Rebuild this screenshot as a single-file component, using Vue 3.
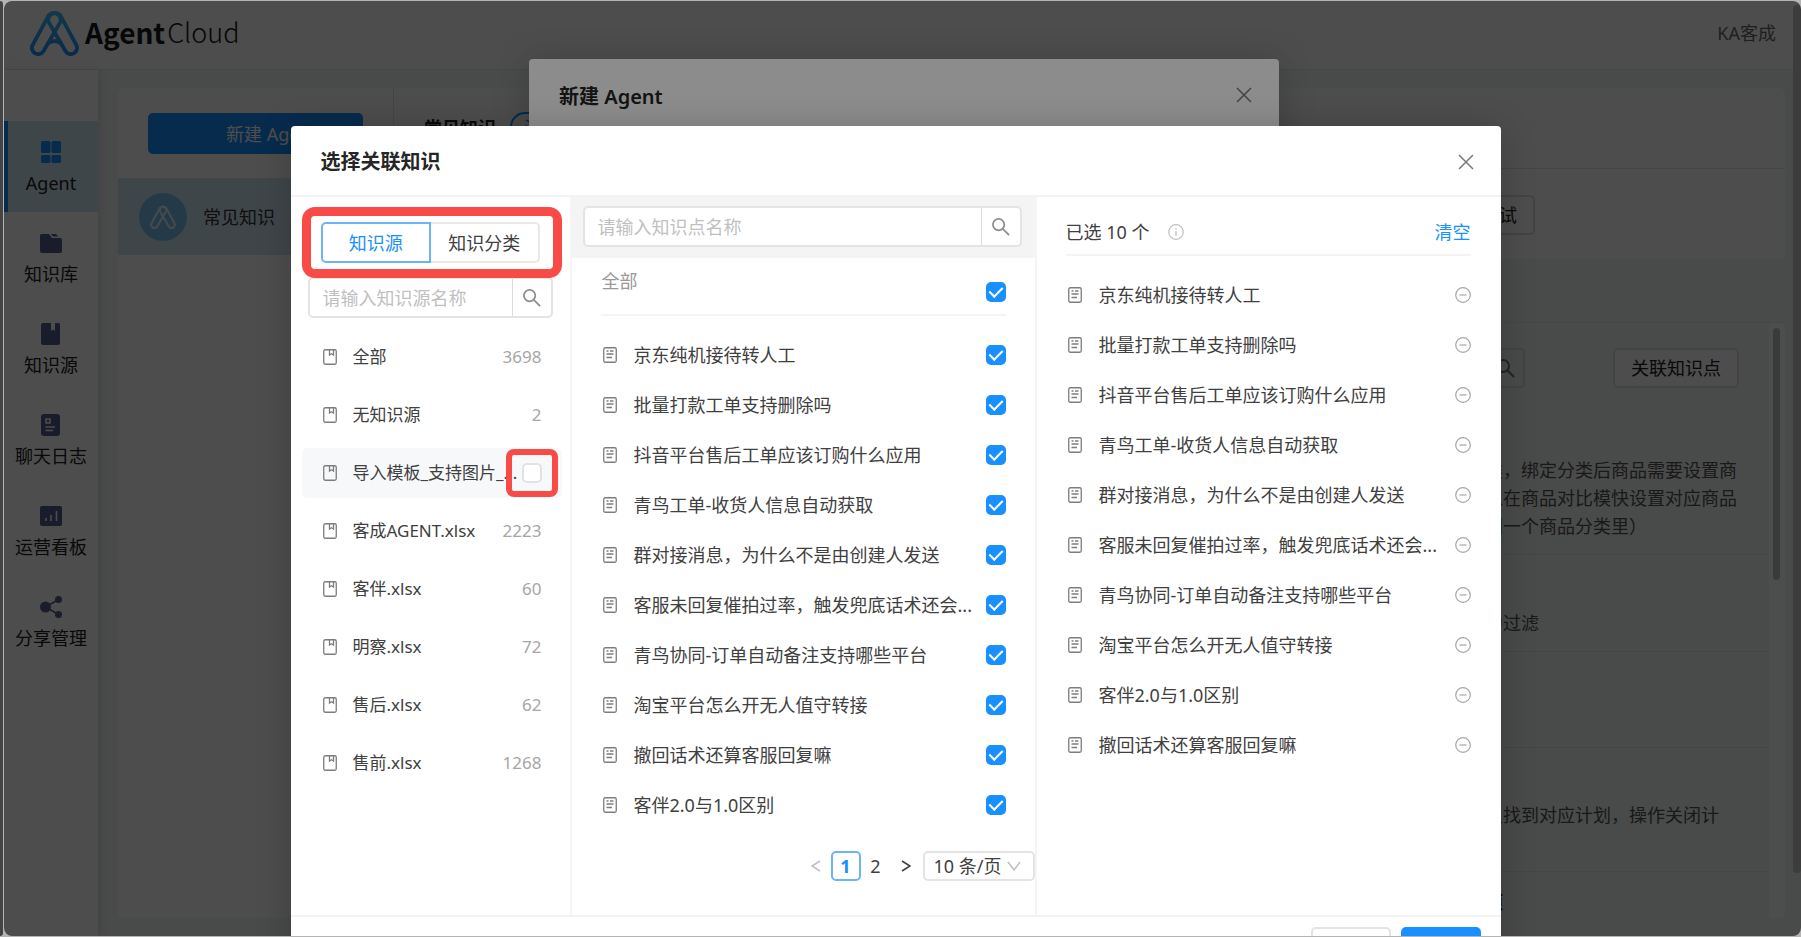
<script setup>
import { ref } from 'vue'

const navItems = [
  { label: 'Agent', icon: 'grid' },
  { label: '知识库', icon: 'folder' },
  { label: '知识源', icon: 'book' },
  { label: '聊天日志', icon: 'log' },
  { label: '运营看板', icon: 'chart' },
  { label: '分享管理', icon: 'share' }
]

const sources = [
  { name: '全部', count: 3698 },
  { name: '无知识源', count: 2 },
  { name: '导入模板_支持图片_...', hovered: true },
  { name: '客成AGENT.xlsx', count: 2223 },
  { name: '客伴.xlsx', count: 60 },
  { name: '明察.xlsx', count: 72 },
  { name: '售后.xlsx', count: 62 },
  { name: '售前.xlsx', count: 1268 }
]

const points = ref([
  '京东纯机接待转人工',
  '批量打款工单支持删除吗',
  '抖音平台售后工单应该订购什么应用',
  '青鸟工单-收货人信息自动获取',
  '群对接消息，为什么不是由创建人发送',
  '客服未回复催拍过率，触发兜底话术还会...',
  '青鸟协同-订单自动备注支持哪些平台',
  '淘宝平台怎么开无人值守转接',
  '撤回话术还算客服回复嘛',
  '客伴2.0与1.0区别'
].map((name) => ({ name, checked: true })))

const selected = [0, 1, 2, 3, 4, 5, 6, 7, 9, 8].map((i) => points.value[i].name)
</script>

<template>
  <div class="desktop">
    <div class="edge"></div>
    <div class="window">
      <header class="topbar">
        <svg class="logo" viewBox="0 0 49 46" aria-hidden="true">
          <defs>
            <linearGradient id="logoFill" x1="0" y1="0" x2="0" y2="46" gradientUnits="userSpaceOnUse">
              <stop offset="0" stop-color="#3fc0f5" />
              <stop offset="1" stop-color="#1e8cff" />
            </linearGradient>
          </defs>
          <g fill="none" stroke="url(#logoFill)" stroke-width="3.8" stroke-linejoin="round">
            <path d="M18.6 5.4 L2.9 34.6 A6.2 6.2 0 0 0 13.4 41.2 L30.6 11.6 A7 7 0 0 0 18.6 5.4 Z" />
            <path d="M30.4 5.4 L46.1 34.6 A6.2 6.2 0 0 1 35.6 41.2 L18.4 11.6 A7 7 0 0 1 30.4 5.4 Z" />
            <path d="M17 34 Q24.500 28 32 34" />
          </g>
        </svg>
        <div class="brand"><b>Agent</b><span>Cloud</span></div>
        <span class="user">KA客成</span>
      </header>

      <div class="body">
        <nav class="sidebar">
          <a v-for="(n, i) in navItems" :key="n.label" href="#" class="nav" :class="{ active: i === 0 }">
            <svg viewBox="0 0 22 22" class="nav-icon" aria-hidden="true">
              <g v-if="n.icon === 'grid'" fill="currentColor">
                <rect x="1" y="0" width="9.500" height="12" rx="1.500" /><rect x="11.500" y="0" width="9.500" height="12" rx="1.500" />
                <rect x="1" y="14" width="9.500" height="8" rx="1.500" /><rect x="11.500" y="14" width="9.500" height="8" rx="1.500" />
              </g>
              <path v-else-if="n.icon === 'folder'" fill="currentColor" d="M1.500 2 H9 L12 6 H20 Q22 6 22 8 V19 Q22 21 20 21 H2 Q0 21 0 19 V3.500 Q0 2 1.500 2 Z M11 2 H16 L18 4.500 H13 Z" />
              <path v-else-if="n.icon === 'book'" fill="currentColor" d="M3 0 H11 V8 L13 6.500 L15 8 V0 H18.500 Q20 0 20 2 V20 Q20 22 18 22 H3 Q1 22 1 20 V2 Q1 0 3 0 Z" />
              <g v-else-if="n.icon === 'log'">
                <rect x="1" y="0" width="19" height="22" rx="3" fill="currentColor" />
                <path d="M6 5 H10 V9 H6 Z M5.500 13 H15 M5.500 16.500 H13" fill="none" stroke="#fff" stroke-width="1.600" />
              </g>
              <g v-else-if="n.icon === 'chart'">
                <rect x="0" y="1" width="22" height="20" rx="2" fill="currentColor" />
                <path d="M6 13 V16 M11 10 V16 M16.500 6 V16" fill="none" stroke="#fff" stroke-width="1.600" />
              </g>
              <g v-else fill="currentColor">
                <circle cx="5.500" cy="11" r="5.500" /><circle cx="18.500" cy="3.500" r="3.500" /><circle cx="18.500" cy="18.500" r="3.500" />
                <path d="M18.500 3.500 L5.500 11 L18.500 18.500" fill="none" stroke="currentColor" stroke-width="1.500" />
              </g>
            </svg>
            <span>{{ n.label }}</span>
          </a>
        </nav>

        <main class="card">
          <section class="agents">
            <button type="button" class="create">新建 Agent</button>
            <a href="#" class="agent">
              <span class="avatar">
                <svg viewBox="0 0 49 46" aria-hidden="true">
                  <g fill="none" stroke="currentColor" stroke-width="4">
                    <path d="M18.600 5.400 L2.900 34.600 A6.200 6.200 0 0 0 13.400 41.200 L30.600 11.600 A7 7 0 0 0 18.600 5.400 Z" />
                    <path d="M30.400 5.400 L46.100 34.600 A6.200 6.200 0 0 1 35.600 41.200 L18.400 11.600 A7 7 0 0 1 30.400 5.400 Z" />
                  </g>
                </svg>
              </span>
              常见知识
            </a>
          </section>
          <section class="detail">
            <div class="detail-head"><h2>常见知识</h2><span class="pill">活</span></div>
            <div class="tools"><button type="button" class="outline">测试</button></div>
            <div class="band"></div>
            <div class="scroll">
              <div class="feed">
                <div class="filter">
                  <span class="mini-search">
                    <svg viewBox="0 0 20 20" aria-hidden="true"><circle cx="8" cy="8" r="6" /><path d="M12.500 12.500 L19 19" /></svg>
                  </span>
                  <button type="button" class="outline">关联知识点</button>
                </div>
                <p class="first">类，绑定分类后商品需要设置商<br />以在商品对比模快设置对应商品<br />同一个商品分类里）</p>
                <p class="short">中过滤</p>
                <p class="blank"></p>
                <p class="plan">里找到对应计划，操作关闭计</p>
                <p class="last">项</p>
              </div>
              <div class="track"><div class="thumb"></div></div>
            </div>
          </section>
        </main>
      </div>
      <div class="page-thumb"></div>

      <div class="mask mask-back">
        <div class="dialog back" role="dialog" aria-label="新建 Agent">
          <h2>新建 Agent</h2>
          <button type="button" class="close" aria-label="关闭">
            <svg viewBox="0 0 16 16" aria-hidden="true"><path d="M1 1 L15 15 M15 1 L1 15" /></svg>
          </button>
        </div>
      </div>

      <div class="mask mask-front">
        <div class="dialog front" role="dialog" aria-label="选择关联知识">
          <div class="front-head">
            <h2>选择关联知识</h2>
            <button type="button" class="close" aria-label="关闭">
              <svg viewBox="0 0 16 16" aria-hidden="true"><path d="M1 1 L15 15 M15 1 L1 15" /></svg>
            </button>
          </div>

          <div class="columns">
            <section class="col-source">
              <div class="tabs">
                <button type="button" class="tab on">知识源</button><button type="button" class="tab">知识分类</button>
                <div class="mark mark-tabs"></div>
              </div>
              <div class="search">
                <input type="text" placeholder="请输入知识源名称" aria-label="知识源名称" />
                <button type="button" aria-label="搜索">
                  <svg viewBox="0 0 20 20" aria-hidden="true"><circle cx="8" cy="8" r="6" /><path d="M12.500 12.500 L19 19" /></svg>
                </button>
              </div>
              <ul class="sources">
                <li v-for="s in sources" :key="s.name" :class="{ hovered: s.hovered }">
                  <svg class="item-icon" viewBox="0 0 14 16" aria-hidden="true">
                    <rect x="0.750" y="0.750" width="12.500" height="14.500" rx="1.500" /><path d="M6.500 1 V6 L8.500 4.800 L10.500 6 V1" />
                  </svg>
                  <span class="name">{{ s.name }}</span>
                  <span v-if="s.hovered" class="check-wrap">
                    <input type="checkbox" class="check" :aria-label="s.name" />
                    <span class="mark mark-check"></span>
                  </span>
                  <span v-else class="count">{{ s.count }}</span>
                </li>
              </ul>
            </section>

            <section class="col-points">
              <div class="search-bar">
                <div class="search">
                  <input type="text" placeholder="请输入知识点名称" aria-label="知识点名称" />
                  <button type="button" aria-label="搜索">
                    <svg viewBox="0 0 20 20" aria-hidden="true"><circle cx="8" cy="8" r="6" /><path d="M12.500 12.500 L19 19" /></svg>
                  </button>
                </div>
              </div>
              <label class="all"><span>全部</span><input type="checkbox" class="check" checked /></label>
              <ul class="points">
                <li v-for="p in points" :key="p.name">
                  <label>
                    <svg class="item-icon" viewBox="0 0 14 16" aria-hidden="true">
                      <rect x="0.750" y="0.750" width="12.500" height="14.500" rx="1.500" /><path d="M3.500 4 H5.500 M7 4 H10.500 M3.500 7 H10.500 M3.500 10.500 H9" />
                    </svg>
                    <span class="name">{{ p.name }}</span>
                    <input v-model="p.checked" type="checkbox" class="check" />
                  </label>
                </li>
              </ul>
              <div class="pager">
                <button type="button" class="arrow off" aria-label="上一页"><svg viewBox="0 0 10 14" aria-hidden="true"><path d="M9 2 L1 7 L9 12" /></svg></button>
                <button type="button" class="page on">1</button>
                <button type="button" class="page">2</button>
                <button type="button" class="arrow" aria-label="下一页"><svg viewBox="0 0 10 14" aria-hidden="true"><path d="M1 2 L9 7 L1 12" /></svg></button>
                <span class="size">
                  <select aria-label="每页条数"><option>10 条/页</option></select>
                  <svg viewBox="0 0 14 10" aria-hidden="true"><path d="M1 1 L7 9 L13 1" /></svg>
                </span>
              </div>
            </section>

            <section class="col-selected">
              <div class="selected-head">
                <span>已选 10 个</span>
                <svg class="round" viewBox="0 0 16 16" aria-hidden="true"><circle cx="8" cy="8" r="7.300" /><path d="M8 7 V12 M8 4 V5.400" /></svg>
                <button type="button" class="clear">清空</button>
              </div>
              <ul class="picked">
                <li v-for="name in selected" :key="name">
                  <svg class="item-icon" viewBox="0 0 14 16" aria-hidden="true">
                    <rect x="0.750" y="0.750" width="12.500" height="14.500" rx="1.500" /><path d="M3.500 4 H5.500 M7 4 H10.500 M3.500 7 H10.500 M3.500 10.500 H9" />
                  </svg>
                  <span class="name">{{ name }}</span>
                  <button type="button" class="remove" :aria-label="'移除 ' + name">
                    <svg class="round" viewBox="0 0 16 16" aria-hidden="true"><circle cx="8" cy="8" r="7.300" /><path d="M4.500 8 H11.500" /></svg>
                  </button>
                </li>
              </ul>
            </section>
          </div>

          <div class="front-foot">
            <button type="button" class="cancel">取消</button>
            <button type="button" class="confirm">确定</button>
          </div>
        </div>
      </div>
    </div>
  </div>
</template>

<style>
html, body { margin: 0; overflow: hidden; }
</style>

<style scoped>
* { box-sizing: border-box; }
.desktop {
  position: relative;
  height: 100vh;
  padding: 1px 0 1px 4px;
  background: #b4b4b4;
  font-family: "Noto Sans", "Noto Sans CJK SC", sans-serif;
  font-size: 18px;
  line-height: 28px;
  color: #404040;
}
.edge { position: absolute; left: 0; top: 1px; bottom: 1px; width: 3px; background: #444; border-radius: 0 6px 6px 0; }
.window { position: relative; display: flex; flex-direction: column; height: 100%; overflow: hidden; border-radius: 8px; background: #f5f7f7; }
button, input, select { font: inherit; color: inherit; margin: 0; }
button { padding: 0; border: 0; background: none; cursor: pointer; white-space: nowrap; }
a { color: inherit; text-decoration: none; }
ul { list-style: none; margin: 0; padding: 0; }
h2, p { margin: 0; }
svg { display: block; flex: none; }

.topbar { flex: none; display: flex; align-items: center; height: 69px; padding: 0 25px 4px 26px; background: #fff; border-bottom: 1px solid #ebebeb; }
.logo { width: 49px; height: 46px; }
.brand { display: flex; gap: 2px; margin-left: 6px; padding-bottom: 2px; font-family: "Noto Sans CJK SC", sans-serif; font-size: 28px; line-height: 40px; color: #14181c; }
.brand span { font-size: 27px; font-weight: 300; }
.user { margin-left: auto; color: #6b6b6b; }

.body { flex: 1; display: flex; min-height: 0; }
.sidebar { flex: none; width: 94px; padding-top: 51px; background: #fff; box-shadow: 2px 0 8px rgba(40, 60, 120, 0.14); }
.nav { display: flex; flex-direction: column; align-items: center; gap: 6px; height: 91px; padding-top: 20px; color: #555e8c; }
.nav span { color: #222; }
.nav.active { background: #d2e9f2; border-left: 4px solid #1890ff; padding-right: 4px; color: #1890ff; }
.nav-icon { width: 22px; height: 22px; }

.card { flex: 1; display: flex; min-width: 0; margin: 18px 16px 18px 20px; background: #fff; border-radius: 6px; overflow: hidden; }
.agents { flex: none; width: 276px; padding-top: 25px; border-right: 1px solid #e8e8e8; }
.create { display: block; width: 215px; height: 41px; margin: 0 30px 24px; padding-left: 32px; background: #1890ff; color: #fff; border-radius: 5px; }
.agent { display: flex; align-items: center; gap: 16px; height: 77px; padding-left: 21px; background: #d2e9f2; color: #333; }
.avatar { display: grid; place-items: center; width: 48px; height: 48px; border-radius: 50%; background: #7cc4f4; color: #e6f4ff; }
.avatar svg { width: 26px; height: 24px; }
.detail { flex: 1; display: flex; flex-direction: column; min-width: 0; }
.detail-head { flex: none; display: flex; align-items: center; gap: 14px; height: 81px; padding-left: 30px; border-bottom: 1px solid #e6e6e6; color: #1f1f1f; }
.detail-head h2 { font-size: 18px; }
.pill { padding: 0 12px; border: 2px solid #1890ff; border-radius: 15px; color: #1890ff; }
.tools { flex: none; display: flex; justify-content: flex-end; height: 90px; padding: 26px 250px 0 0; }
.outline { height: 40px; padding: 0 16px; border: 2px solid #e0e0e0; border-radius: 5px; background: #fff; color: #222; }
.band { flex: none; height: 64px; background: #f3f7f6; border-bottom: 1px solid #e6ecec; }
.scroll { flex: 1; display: flex; min-height: 0; overflow: hidden; }
.feed { flex: 1; background: #f3f7f6; display: flex; flex-direction: column; align-items: stretch; }
.filter { display: flex; justify-content: flex-end; gap: 88px; padding: 25px 30px 68px 0; }
.mini-search { display: flex; align-items: center; justify-content: flex-end; width: 60px; height: 40px; padding-right: 8px; border: 2px solid #e0e0e0; border-radius: 5px; }
.mini-search svg { width: 20px; height: 20px; fill: none; stroke: #777; stroke-width: 2; }
.feed p { flex: none; padding-left: calc(100% - 284px); border-bottom: 1px solid #e4eaea; white-space: nowrap; color: #555; }
.feed .first { height: 99px; }
.feed .short { height: 97px; padding-top: 54px; }
.feed .blank { height: 96px; }
.feed .plan { height: 124px; padding-top: 53px; }
.feed .last { flex: 1; padding-top: 16px; border: 0; color: #222; font-weight: 700; }
.track { flex: none; width: 16px; padding: 5px 4px; background: #fff; }
.thumb { width: 7px; height: 252px; border-radius: 4px; background: #c4c4c4; }
.page-thumb { position: absolute; top: 4px; right: 0; bottom: 63px; width: 8px; border-radius: 4px; background: #c8c8c8; }

.mask { position: absolute; inset: 0; display: flex; justify-content: center; background: rgba(0, 0, 0, 0.45); overflow: hidden; }
.mask-back { padding: 58px 0 0 3px; }
.mask-front { padding: 125px 14px 0 0; }
.dialog { background: #fff; border-radius: 4px; box-shadow: 0 4px 36px rgba(0, 0, 0, 0.2); }
.dialog h2 { font-size: 20px; font-weight: 700; line-height: 28px; color: #262626; }
.close { display: grid; place-items: center; width: 24px; height: 24px; }
.close svg { width: 16px; height: 16px; fill: none; stroke: #7a7a7a; stroke-width: 1.5; }
.back { display: flex; justify-content: space-between; width: min(750px, 80vw); min-height: 100%; padding: 24px 23px 0 30px; }
.back h2 { font-weight: 600; }

.front { display: flex; flex-direction: column; width: min(1210px, 90vw); height: max-content; }
.front-head { display: flex; align-items: center; justify-content: space-between; height: 71px; padding: 2px 23px 0 30px; border-bottom: 2px solid #f3f3f3; }
.columns { display: grid; grid-template-columns: 281px minmax(0, 1fr) 464px; border-bottom: 2px solid #f3f3f3; }
.col-source { padding: 25px 8px 0 11px; border-right: 2px solid #f5f5f5; }
.tabs { position: relative; display: flex; margin: 0 22px 0 19px; }
.tab { flex: 1; height: 41px; border: 2px solid #e8e8e8; border-radius: 0 5px 5px 0; border-left: 0; background: #fff; }
.tab.on { border: 2px solid #69b5f8; border-radius: 5px 0 0 5px; color: #1890ff; }
.mark { position: absolute; pointer-events: none; border: 9px solid #f84b48; border-radius: 13px; z-index: 2; }
.mark-tabs { inset: -15px -22px -15px -19px; }
.mark-check { inset: -14px -16px; border-width: 6px; border-radius: 8px; }
.search { display: flex; height: 41px; border: 2px solid #e4e4e4; border-radius: 5px; background: #fff; }
.col-source .search { margin: 14px 9px 14px 6px; }
.search input { flex: 1; min-width: 0; padding: 0 13px; border: 0; outline: 0; background: none; }
.search input::placeholder { color: #bfbfbf; opacity: 1; }
.search button { flex: none; display: grid; place-items: center; width: 39px; border-left: 1px solid #dcdcdc; }
.search svg { width: 19px; height: 19px; fill: none; stroke: #8c8c8c; stroke-width: 1.8; }
.item-icon { width: 14px; height: 16px; fill: none; stroke: #7d7d7d; stroke-width: 1.3; }
.sources { display: flex; flex-direction: column; gap: 8px; font-size: 17px; }
.sources li { display: flex; align-items: center; height: 50px; padding: 0 20px 0 21px; border-radius: 5px; }
.sources li.hovered { background: #f6f8fa; }
.sources .name { margin-left: 16px; white-space: nowrap; }
.count { margin-left: auto; color: #a6a6a6; }
.check-wrap { position: relative; display: flex; margin-left: auto; }
.check { appearance: none; flex: none; display: grid; place-items: center; width: 20px; height: 20px; border: 2px solid #e2e2e2; border-radius: 5px; background: #fff; }
.check:checked { border-color: #1890ff; background: #1890ff; }
.check:checked::after { content: ""; width: 6px; height: 11px; margin-bottom: 3px; border: solid #fff; border-width: 0 2px 2px 0; transform: rotate(45deg); }

.col-points { display: flex; flex-direction: column; border-right: 2px solid #f5f5f5; padding-bottom: 34px; }
.search-bar { padding: 9px 13px 11px 11px; background: #f4f4f4; }
.all { display: flex; justify-content: space-between; height: 58px; margin: 0 29px 14px; padding: 9px 0 0 1px; border-bottom: 2px solid #f4f4f4; color: #999; }
.all .check { margin-top: 15px; }
.points label { display: flex; align-items: center; height: 50px; padding: 0 29px 0 31px; }
.points .name, .picked .name { margin-left: 17px; white-space: nowrap; }
.points .check, .remove { margin-left: auto; }
.pager { display: flex; align-items: center; justify-content: flex-end; margin-top: 21px; }
.pager button { height: 30px; width: 30px; }
.page.on { border: 2px solid #69b5f8; border-radius: 5px; color: #1890ff; font-weight: 700; line-height: 26px; }
.arrow { display: grid; place-items: center; }
.arrow svg { width: 10px; height: 14px; fill: none; stroke: #404040; stroke-width: 1.6; }
.arrow.off svg { stroke: #bfbfbf; }
.size { position: relative; margin-left: 2px; }
.size select { display: block; appearance: none; width: 112px; height: 30px; padding: 0 28px 0 9px; border: 2px solid #e4e4e4; border-radius: 5px; background: #fff; line-height: 26px; }
.size svg { position: absolute; right: 14px; top: 10px; width: 14px; height: 10px; fill: none; stroke: #bfbfbf; stroke-width: 1.5; pointer-events: none; }

.selected-head { display: flex; align-items: center; height: 59px; margin: 0 30px 14px 29px; padding-top: 12px; border-bottom: 2px solid #f4f4f4; }
.round { width: 16px; height: 16px; fill: none; stroke: #a6a6a6; stroke-width: 1.2; }
.selected-head .round { margin-left: 19px; stroke: #bfbfbf; }
.clear { margin-left: auto; color: #1890ff; }
.picked li { display: flex; align-items: center; height: 50px; padding: 0 30px 0 31px; }

.front-foot { display: flex; justify-content: flex-end; gap: 10px; padding: 10px 20px; }
.front-foot button { width: 80px; height: 41px; border-radius: 5px; border: 2px solid #e4e4e4; }
.front-foot .confirm { border-color: #1890ff; background: #1890ff; color: #fff; }
</style>
